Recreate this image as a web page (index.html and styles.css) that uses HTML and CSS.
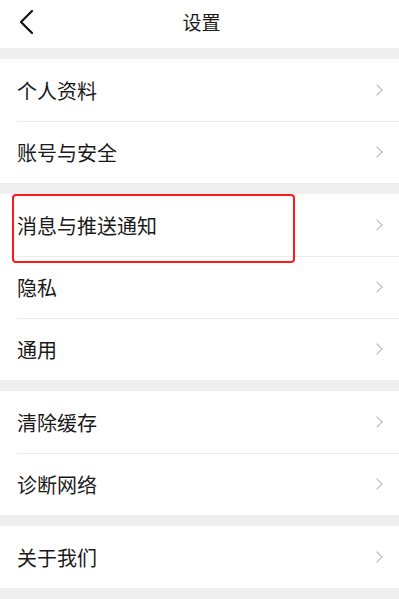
FILE: index.html
```html
<!DOCTYPE html>
<html lang="zh-CN">
<head>
  <meta charset="UTF-8">
  <meta name="viewport" content="width=device-width, initial-scale=1.0">
  <title>设置</title>
  <link rel="stylesheet" href="styles.css">
</head>
<body>

  <header class="top-bar">
    <a class="back-btn" href="#">
      <svg width="16" height="26" viewBox="0 0 16 26">
        <path d="M14 2 L3 13 L14 24" fill="none" stroke="#111" stroke-width="2.2" stroke-linecap="round" stroke-linejoin="round"/>
      </svg>
    </a>
    <div class="top-title">设置</div>
  </header>

  <main class="settings">
    <section class="group">
      <div class="item"><span>个人资料</span><i class="chev"></i></div>
      <div class="item"><span>账号与安全</span><i class="chev"></i></div>
    </section>

    <section class="group">
      <div class="item highlighted">
        <span>消息与推送通知</span><i class="chev"></i>
        <div class="mark"></div> <!-- red annotation box -->
      </div>
      <div class="item"><span>隐私</span><i class="chev"></i></div>
      <div class="item"><span>通用</span><i class="chev"></i></div>
    </section>

    <section class="group">
      <div class="item"><span>清除缓存</span><i class="chev"></i></div>
      <div class="item"><span>诊断网络</span><i class="chev"></i></div>
    </section>

    <section class="group">
      <div class="item"><span>关于我们</span><i class="chev"></i></div>
    </section>
  </main>

</body>
</html>
```

FILE: styles.css
```css
* {
    margin: 0;
    padding: 0;
    box-sizing: border-box;
    }

    body {
    font-family: "Noto Sans CJK SC", "Noto Sans", sans-serif;
    background-color: #efefef;
    color: #1a1a1a;
    min-height: 100vh;
    }

    /* Top bar */
    .top-bar {
    height: 48px;
    background-color: #fff;
    display: flex;
    align-items: center;
    justify-content: center;
    position: relative;
    padding-bottom: 6px;
    }

    .back-btn {
    position: absolute; /* sits over the bar, title stays centred */
    left: 18px;
    top: 9px;
    display: flex;
    }

    .top-title {
    font-size: 19px;
    margin-left: 4px;
    }

    /* Groups */
    .settings {
    display: flex;
    flex-direction: column;
    gap: 11px;
    padding: 11px 0;
    }

    .group {
    background-color: #fff;
    }

    .item {
    height: 62px;
    display: flex;
    align-items: center;
    justify-content: space-between;
    padding: 0 14px 0 17px;
    font-size: 20px;
    position: relative;
    }

    .item + .item::before {
    content: '';
    position: absolute;
    top: 0;
    left: 17px;
    right: 0;
    height: 1px;
    background: #ececec;
    }

    .chev {
    width: 8px;
    height: 8px;
    border-top: 1.5px solid #b4b4b4;
    border-right: 1.5px solid #b4b4b4;
    transform: rotate(45deg);
    margin-right: 4px;
    }

    .mark {
    position: absolute;
    left: 12px;
    top: 0;
    width: 283px;
    height: 69px;
    border: 2.5px solid #ff1a1a;
    border-radius: 4px;
    z-index: 2;
    }
```
